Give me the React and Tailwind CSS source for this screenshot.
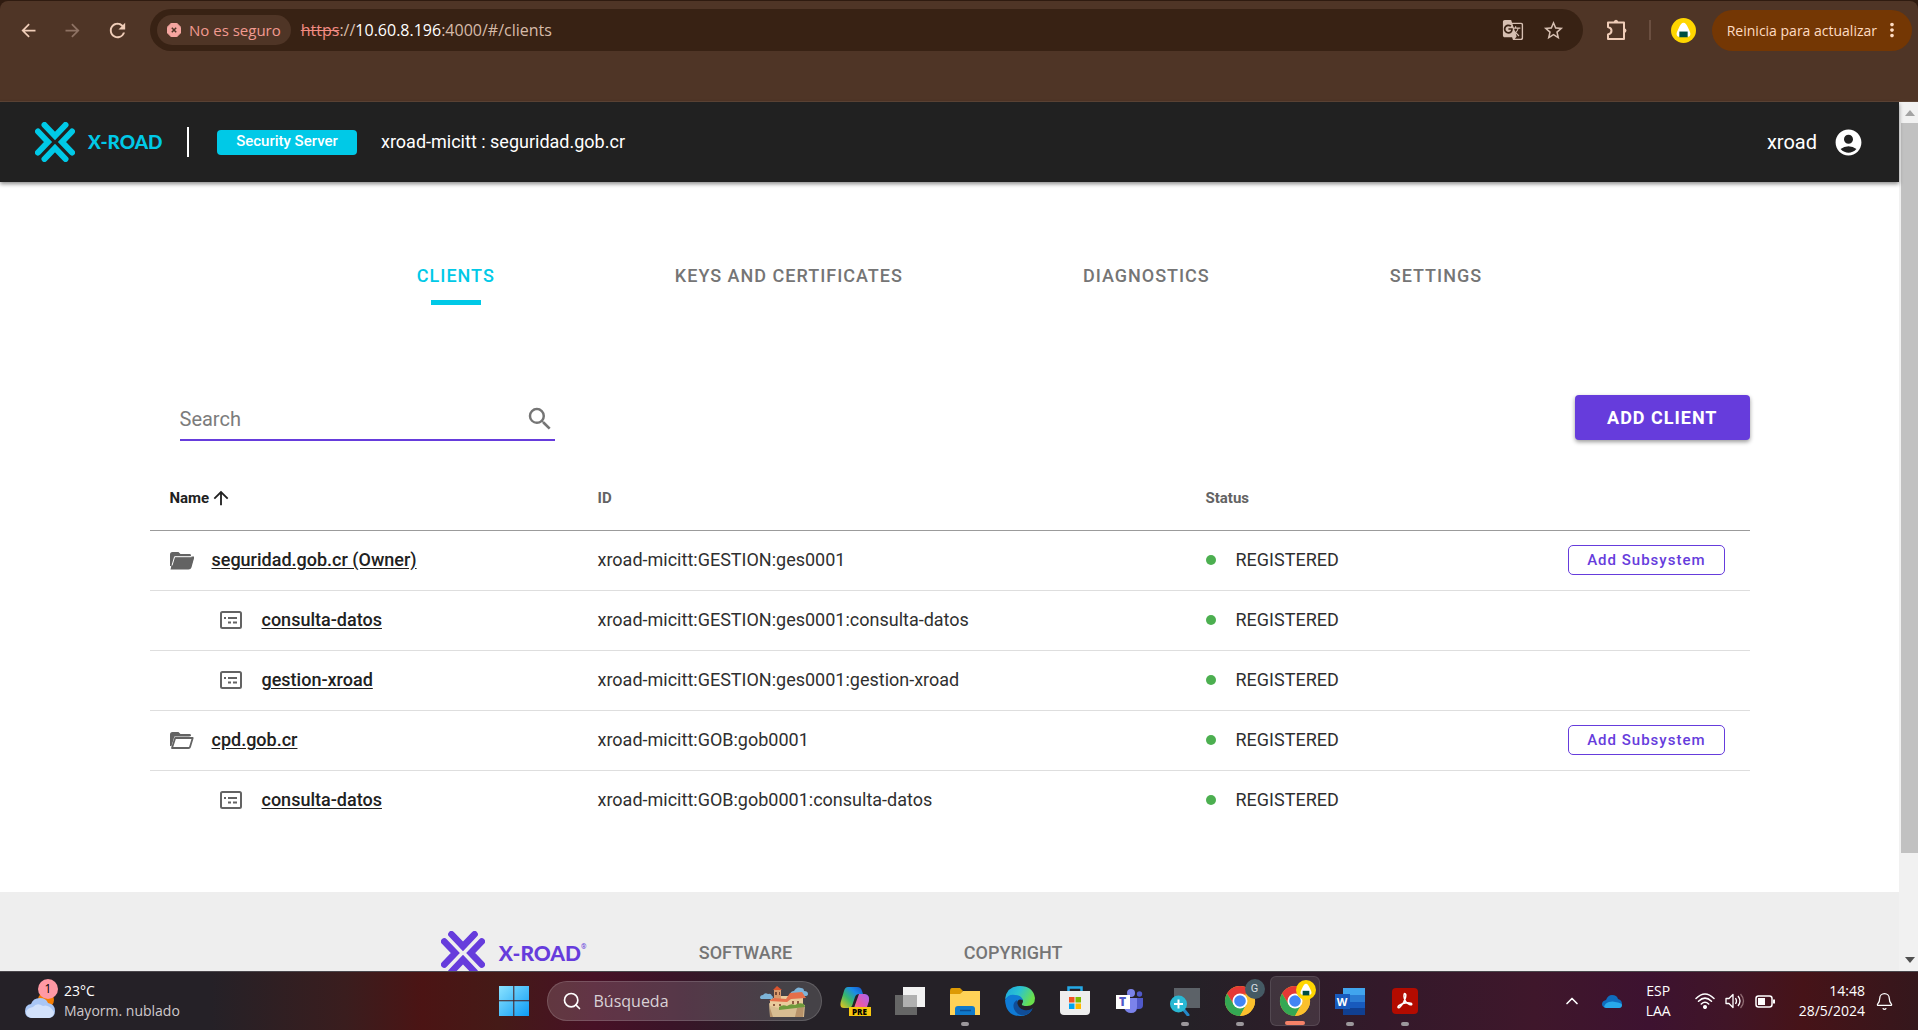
import React from "react";
import {
  MdAccountCircle,
  MdSearch,
  MdArrowBack,
  MdArrowForward,
  MdRefresh,
  MdStarBorder,
  MdGTranslate,
  MdMoreVert,
  MdArrowUpward,
} from "react-icons/md";
import { ChevronUp, Bell, Search } from "lucide-react";

const ui = "font-['Open_Sans',sans-serif]";

const clients = [
  { name: "seguridad.gob.cr (Owner)", id: "xroad-micitt:GESTION:ges0001", kind: "owner" },
  { name: "consulta-datos", id: "xroad-micitt:GESTION:ges0001:consulta-datos", kind: "sub" },
  { name: "gestion-xroad", id: "xroad-micitt:GESTION:ges0001:gestion-xroad", kind: "sub" },
  { name: "cpd.gob.cr", id: "xroad-micitt:GOB:gob0001", kind: "member" },
  { name: "consulta-datos", id: "xroad-micitt:GOB:gob0001:consulta-datos", kind: "sub" },
];

function XMark({ className }) {
  return (
    <svg viewBox="0 0 40 40" className={className} fill="none" stroke="currentColor" strokeWidth="6" strokeLinecap="round" strokeLinejoin="miter">
      <path d="M9.5 3 L20 14 L30.5 3" />
      <path d="M9.5 37 L20 26 L30.5 37" />
      <path d="M3 9.5 L13 20 L3 30.5" />
      <path d="M37 9.5 L27 20 L37 30.5" />
    </svg>
  );
}

function FolderOpen({ filled }) {
  return (
    <svg viewBox="0 0 24 18" className="h-[19px] w-6 text-[#636363]" fill="none">
      <path d="M1 15V2.5Q1 1 2.5 1H8L10 3H20Q21 3 21 4.5" fill="currentColor" />
      <path d="M1 14.5V3Q1 1.5 2.5 1.5H8L10 3.5H20.5" stroke="currentColor" strokeWidth="2" />
      <path d="M2.5 16.5 L5.5 6.5H22.5L20 15.5Q19.700 16.5 18.5 16.5Z" fill={filled ? "currentColor" : "#fff"} stroke={filled ? "currentColor" : "#fff"} strokeWidth="3" />
      <path d="M2 16.5 L5.2 6.5H22.700L20 15.5Q19.700 16.5 18.5 16.5Z" fill={filled ? "currentColor" : "#fff"} stroke="currentColor" strokeWidth="1.8" strokeLinejoin="round" />
      {filled && <path d="M2 14L4.6 5.2H21.5" stroke="#fff" strokeWidth="1" />}
    </svg>
  );
}

function SubsystemIcon() {
  return (
    <svg viewBox="0 0 22 18" className="h-[18px] w-[22px] text-[#636363]" fill="none">
      <rect x="1" y="1" width="20" height="16" rx="1.5" stroke="currentColor" strokeWidth="2" />
      <path d="M4 7H6M8 7H17M8 11.5H11M13 11.5H17" stroke="currentColor" strokeWidth="2" />
    </svg>
  );
}

function PuzzleOutline() {
  return (
    <svg viewBox="0 0 24 24" className="size-6" fill="none" stroke="currentColor" strokeWidth="2" strokeLinejoin="round">
      <path d="M3 4.500H19V21H3V16.500Q6.500 15.500 6.500 12.700T3 9Z" />
      <path d="M8.500 4.500Q9 1.800 11 1.800T13.500 4.500ZM19 10Q21.500 10.500 21.500 12.500T19 15Z" fill="currentColor" stroke="none" />
    </svg>
  );
}

function Onigiri({ className }) {
  return (
    <svg viewBox="0 0 24 24" className={className}>
      <circle cx="12" cy="12" r="12" fill="#ffd600" />
      <path d="M12 4.5c2 0 3 2 4.5 5 1.5 3 2.5 5 2 6.5-.3 1.5-1.5 2-3 2h-7c-1.5 0-2.700-.5-3-2-.5-1.5.5-3.5 2-6.5 1.5-3 2.5-5 4.5-5z" fill="#fff" />
      <path d="M8 13h8v5.5H8z" fill="#004d40" />
    </svg>
  );
}

function Chrome({ className }) {
  return (
    <svg viewBox="0 0 32 32" className={className}>
      <circle cx="16" cy="16" r="15" fill="#fbc02d" />
      <path d="M3 8.5A15 15 0 0 1 29 8.5L16 9L10 20Z" fill="#e53935" />
      <path d="M3 8.5A15 15 0 0 0 16 31L22 20L10 20Z" fill="#34a853" />
      <path d="M29 8.5A15 15 0 0 1 16 31L22.5 19.5L16 9Z" fill="#fbc02d" />
      <path d="M29 8.5H16V10Z" fill="#e53935" />
      <circle cx="16" cy="16" r="7.5" fill="#fff" />
      <circle cx="16" cy="16" r="5.8" fill="#4285f4" />
    </svg>
  );
}

function BrowserBar() {
  return (
    <div className={`${ui} h-[102px] shrink-0 border-t border-b border-[#2f1b10] border-b-[#5e4536] bg-[#2f1b10]`}>
      <div className="h-full rounded-t-lg bg-[#4f3526]">
        <div className="flex items-center pt-2 pr-[6px] pl-4 text-[#f0cdb8]">
          <button aria-label="Atrás" className="grid size-6 place-items-center"><MdArrowBack size={21} /></button>
          <button aria-label="Adelante" className="ml-5 grid size-6 place-items-center text-[#8e7263]"><MdArrowForward size={21} /></button>
          <button aria-label="Recargar" className="ml-[21px] grid size-6 place-items-center"><MdRefresh size={23} /></button>
          <div className="ml-[21px] flex h-[42px] min-w-0 flex-1 items-center rounded-full bg-[#382214] pr-[18px] pl-[7px]">
            <button className="flex h-[30px] items-center gap-2 rounded-full bg-[#4f3526] pr-[10px] pl-[10px] text-[15px] text-[#f29a90]">
              <svg viewBox="0 0 14 14" className="size-[14px]">
                <path d="M4.5 0h5L14 4.5v5L9.5 14h-5L0 9.5v-5z" fill="#f6a6a0" stroke="#f6a6a0" strokeLinejoin="round" />
                <path d="M4.8 4.8l4.4 4.4M9.2 4.8L4.8 9.2" stroke="#4f3526" strokeWidth="1.5" />
              </svg>
              No es seguro
            </button>
            <div className="ml-[10px] flex-1 text-base text-[#d6bba9]">
              <span className="text-[#f28b82] line-through">https</span>://<span className="text-white">10.60.8.196</span>:4000/#/clients
            </div>
            <button aria-label="Traducir" className="text-[#d6bfb1]"><MdGTranslate size={22} /></button>
            <button aria-label="Marcador" className="ml-[18px] text-[#d6bfb1]"><MdStarBorder size={23} /></button>
          </div>
          <button aria-label="Extensiones" className="ml-[22px]"><PuzzleOutline /></button>
          <div className="ml-5 h-5 w-[2px] bg-[#6b4f40]" />
          <button aria-label="Perfil" className="ml-5"><Onigiri className="size-[25px]" /></button>
          <button className="ml-4 flex h-[41px] items-center gap-1 rounded-full bg-[#743704] pr-[9px] pl-[15px] text-[14px] text-[#ffdcc3]">
            Reinicia para actualizar
            <MdMoreVert size={22} />
          </button>
        </div>
      </div>
    </div>
  );
}

function AppHeader() {
  return (
    <header className="relative z-10 flex h-20 shrink-0 items-center bg-[#212121] px-[35px] text-white shadow-[0_2px_4px_rgba(0,0,0,0.45)]">
      <XMark className="size-10 text-[#00c9e7]" />
      <span className="ml-[13px] w-[79px] font-['Lato',sans-serif] text-[19px] font-black text-[#00c9e7]">X-ROAD</span>
      <div className="ml-5 h-[30px] w-[2px] bg-white" />
      <span className="ml-7 flex h-[25px] w-[140px] items-center justify-center rounded bg-[#00c9e7] pb-[2px] text-[15px] font-medium">Security Server</span>
      <span className="ml-6 text-lg">xroad-micitt : seguridad.gob.cr</span>
      <span className="ml-auto text-xl">xroad</span>
      <button aria-label="Account" className="ml-4"><MdAccountCircle size={31} /></button>
    </header>
  );
}

function Tabs() {
  return (
    <nav className="mt-[74px] flex justify-center gap-[180px] text-lg font-medium tracking-[1px] text-[#757575]">
      <a href="#clients" className="flex flex-col items-center text-[#00c9e7]">
        <span className="leading-10">CLIENTS</span>
        <span className="mt-1 h-[5px] w-[50px] bg-[#00c9e7]" />
      </a>
      <a href="#keys" className="leading-10">KEYS AND CERTIFICATES</a>
      <a href="#diagnostics" className="leading-10">DIAGNOSTICS</a>
      <a href="#settings" className="leading-10">SETTINGS</a>
    </nav>
  );
}

function ClientsTable() {
  return (
    <table className="mt-[26px] w-full table-fixed border-collapse text-left text-lg text-[#2f2f2f]">
      <colgroup>
        <col className="w-[27%]" />
        <col className="w-[38%]" />
        <col className="w-[18%]" />
        <col />
      </colgroup>
      <thead>
        <tr className="h-[63px] border-b border-[#9b9b9b] text-[15px] text-[#636363]">
          <th className="pl-5 font-bold text-[#212121]"><span className="flex items-center">Name <MdArrowUpward size={22} className="ml-px" /></span></th>
          <th className="pl-4 font-bold">ID</th>
          <th className="pl-4 font-bold">Status</th>
          <th aria-label="Actions" />
        </tr>
      </thead>
      <tbody>
        {clients.map((c) => (
          <tr key={c.id} className="h-[60px] border-b border-[#dedede] last:border-0">
            <td className={c.kind === "sub" ? "pl-[70px]" : "pl-5"}>
              <div className="flex items-center">
                {c.kind === "sub" ? <SubsystemIcon /> : <FolderOpen filled={c.kind === "owner"} />}
                <a href="#client" className={`${c.kind === "sub" ? "ml-5" : "ml-[18px]"} font-medium text-[#212121] underline underline-offset-2`}>{c.name}</a>
              </div>
            </td>
            <td className="pl-4">{c.id}</td>
            <td className="pl-4">
              <span className="flex items-center gap-5"><i className="size-[10px] rounded-full bg-[#4caf50]" />REGISTERED</span>
            </td>
            <td className="pr-[25px] text-right">
              {c.kind !== "sub" && (
                <button className="h-[30px] rounded-[5px] border border-[#663cdc] px-[18px] align-middle text-[15px] leading-none font-medium tracking-[1px] text-[#663cdc]">Add Subsystem</button>
              )}
            </td>
          </tr>
        ))}
      </tbody>
    </table>
  );
}

function Footer() {
  return (
    <footer className="mt-auto flex h-[79px] shrink-0 items-start overflow-hidden bg-[#eeeeee] pl-[23%] text-lg font-medium text-[#757575]">
      <div className="flex w-[262px] shrink-0 items-center pt-[39px] pl-1 text-[#663cdc]">
        <XMark className="size-11" />
        <span className="ml-[14px] font-['Lato',sans-serif] text-[21px] font-black">X-ROAD</span>
        <span className="-mt-3 text-[7px]">®</span>
      </div>
      <span className="mt-[47px] w-[265px]">SOFTWARE</span>
      <span className="mt-[47px]">COPYRIGHT</span>
    </footer>
  );
}

function Scrollbar() {
  return (
    <div className="flex w-[19px] shrink-0 flex-col items-center bg-[#f1f1f1] pl-[2px]">
      <svg viewBox="0 0 10 6" className="mt-2 h-[6px] w-[10px]"><path d="M0 6L5 0l5 6z" fill="#a3a3a3" /></svg>
      <div className="mt-[7px] w-full flex-[730] bg-[#c1c1c1]" />
      <div className="flex-[104]" />
      <svg viewBox="0 0 10 6" className="mb-2 h-[6px] w-[10px]"><path d="M0 0L5 6l5-6z" fill="#505050" /></svg>
    </div>
  );
}

function Castle() {
  return (
    <svg viewBox="0 0 50 31" className="h-[31px] w-[50px]">
      <path d="M1 12q0-3 3-3 2-3 5-1 3-1 4 2 2 1 0 3H2zM31 8q1-3 4-3 3-5 7-3 3 0 3 3 4 0 4 3 0 2-3 2H32z" fill="#7db3d8" />
      <path d="M10 17l10 4 26-2-1 12H11z" fill="#d8bd92" />
      <path d="M11 22l3 9h-3zM38 22l7-2-1 11h-8z" fill="#b8936a" />
      <path d="M11 14l7-4h26v11l-24 1-9-2z" fill="#eacb9c" />
      <path d="M15 4h7v10h-7z" fill="#d99a6c" />
      <path d="M14 4l4-4 5 4z" fill="#d9542f" />
      <path d="M16 6h2v3h-2zM20 6h1v3h-1z" fill="#7a4a35" />
      <path d="M10 15l5-3 12 1 4-6 12-1 4 6-15 1-4 3z" fill="#e66f4a" />
      <path d="M14 18h2v2h-2zM20 18h2v2h-2zM33 15h2v3h-2zM38 15h2v3h-2z" fill="#8f5c42" />
      <path d="M20 21q4-3 8-1 4-3 8-1 4-3 9-1l1 3-26 3z" fill="#6f9a3c" />
    </svg>
  );
}

function TaskButton({ children, indicator, active, label }) {
  return (
    <button aria-label={label} className={`relative grid h-[50px] w-[50px] shrink-0 place-items-center rounded-md ${active ? "border border-white/10 bg-white/10" : ""}`}>
      {children}
      {indicator && <span className={`absolute bottom-0 left-1/2 h-1 -translate-x-1/2 rounded-full ${active ? "w-5 bg-[#f58268]" : "w-2 bg-[#9c989c]"}`} />}
    </button>
  );
}

function Taskbar() {
  return (
    <div className={`${ui} flex h-[59px] shrink-0 items-center border-t border-[#4a464b] bg-[linear-gradient(90deg,#252127_0%,#252127_11%,#3a1d1e_18%,#4b1414_22%,#451a17_26%,#471126_31%,#3a1428_35%,#252127_41%,#252127_62%,#33192a_72%,#3f172b_80%,#3d1230_86%,#401527_90%,#461318_94%,#35171c_100%)] text-white`}>
      <button className="flex flex-1 items-center gap-2 pl-6 text-left text-[14px] leading-5">
        <span className="relative block h-[38px] w-8">
          <svg viewBox="0 0 32 38" className="h-[38px] w-8">
            <circle cx="22" cy="18" r="8" fill="#f57c00" />
            <path d="M7 36q-6-1-6-7 0-6 6-7 2-6 9-6 6 0 8 5 7 1 7 8 0 6-6 7z" fill="#a9c6f5" />
            <path d="M8 36q-6-1-6-6 1-4 7-5 4-5 10-1 6-2 11 6 0 5-5 6z" fill="#d2e1fb" />
          </svg>
          <span className="absolute -top-[3px] -right-[2px] grid size-5 place-items-center rounded-full bg-[#ff99a4] text-xs text-black">1</span>
        </span>
        <span>23°C<br /><span className="text-[#cfc9cd]">Mayorm. nublado</span></span>
      </button>
      <div className="flex shrink-0 items-center gap-[5px]">
        <TaskButton label="Inicio">
          <svg viewBox="0 0 30 30" className="size-[30px]">
            <defs><linearGradient id="w" x1="0" y1="0" x2="1" y2="1"><stop stopColor="#8be3ff" /><stop offset="1" stopColor="#0d9bf5" /></linearGradient></defs>
            <path d="M0 0h14.3v14.3H0zM15.3 0H30v14.3H15.3zM0 15.3h14.3V30H0zM15.3 15.3H30V30H15.3z" fill="url(#w)" />
          </svg>
        </TaskButton>
        <label className="mx-[3px] flex h-10 w-[275px] items-center rounded-full border border-white/15 bg-white/15 pr-3 pl-[14px]">
          <Search size={20} strokeWidth={2} />
          <input aria-label="Búsqueda" placeholder="Búsqueda" className="ml-3 w-0 min-w-0 flex-1 bg-transparent text-base outline-none placeholder:text-[#d9d2d6]" />
          <Castle />
        </label>
        <TaskButton label="Copilot">
          <span className="relative">
            <svg viewBox="0 0 30 30" className="size-[30px]">
              <defs>
                <linearGradient id="ca" x1="0" y1="1" x2="1" y2="0"><stop stopColor="#f5c518" /><stop offset=".4" stopColor="#37b86b" /><stop offset=".7" stopColor="#1b8be8" /><stop offset="1" stopColor="#1450c8" /></linearGradient>
                <linearGradient id="cb" x1="1" y1="0" x2="0" y2="1"><stop stopColor="#a565f5" /><stop offset=".5" stopColor="#e759a8" /><stop offset="1" stopColor="#ff9b52" /></linearGradient>
              </defs>
              <path d="M8 1h9q4 0 5 4l1 3h-4q-3 0-4 3l-3 9q-1 2-4 2H4q-5 0-3-7l3-10q1-4 4-4z" fill="url(#ca)" />
              <path d="M19 8h6q5 1 4 7l-3 9q-1 4-5 4h-6q-4 0-4-5h1q2 0 3-4z" fill="url(#cb)" />
            </svg>
            <span className="absolute -right-px bottom-0 grid h-[9px] w-[22px] place-items-center bg-[#f9c80e] text-[8px] leading-none font-extrabold text-black">PRE</span>
          </span>
        </TaskButton>
        <TaskButton label="Vista de tareas">
          <svg viewBox="0 0 30 28" className="h-7 w-[30px]"><path d="M8 0h22v20H8z" fill="#f2f2f2" /><path d="M0 8h22v20H0z" fill="#666" /><path d="M8 8h14v12H8z" fill="#b0b0b0" /></svg>
        </TaskButton>
        <TaskButton label="Explorador" indicator>
          <svg viewBox="0 0 30 27" className="h-[27px] w-[30px]"><path d="M0 3q0-3 2-3h8l3 3-3 4H0z" fill="#dd9a04" /><path d="M0 6h10l3-3h17v24H0z" fill="#ffd257" /><path d="M5 27v-6q0-3 3-3h14q3 0 3 3v6z" fill="#0f7acb" /><path d="M10 22.5h11" stroke="#0a4f94" strokeWidth="1.5" /></svg>
        </TaskButton>
        <TaskButton label="Edge">
          <svg viewBox="0 0 30 30" className="size-[30px]">
            <defs><linearGradient id="e" x1="0" y1="0" x2="1" y2=".4"><stop stopColor="#1ba3e0" /><stop offset=".5" stopColor="#2bc3d2" /><stop offset="1" stopColor="#6ae04c" /></linearGradient></defs>
            <path d="M0 13Q2 0 15 0q13 0 15 12 0 8-8 8-6 0-5-2 2-3 0-5-3-4-8-3-6 1-9 3z" fill="url(#e)" />
            <path d="M0 14q3-6 10-5 6 0 8 5-6-2-6 4 1 6 8 8 4 0 7-2-4 6-12 6Q1 30 0 14z" fill="#0f7bd5" />
            <path d="M12 14q-5 3-3 9 3 7 11 6 5-1 8-7-4 3-9 2-7-2-7-10z" fill="#104d97" />
          </svg>
        </TaskButton>
        <TaskButton label="Microsoft Store">
          <svg viewBox="0 0 30 30" className="size-[30px]"><path d="M8.5 5V1.5h13V5" stroke="#24a9e6" strokeWidth="2.5" fill="none" /><path d="M0 5h30v20q0 4-4 4H4q-4 0-4-4z" fill="#eeeeee" /><path d="M9 11h5.5v5.5H9z" fill="#f25022" /><path d="M15.5 11H21v5.5h-5.5z" fill="#7fba00" /><path d="M9 17.5h5.5V23H9z" fill="#00a4ef" /><path d="M15.5 17.5H21V23h-5.5z" fill="#ffb900" /></svg>
        </TaskButton>
        <TaskButton label="Teams">
          <span className="relative">
            <svg viewBox="0 0 28 25" className="h-[25px] w-7"><circle cx="15" cy="4" r="4" fill="#7b83eb" /><circle cx="23.5" cy="5" r="2.7" fill="#5059c9" /><path d="M19 9h8v7q0 4-4 4h-4z" fill="#5059c9" /><path d="M8 9h13v9q0 6-6 6-5 0-7-5z" fill="#7b83eb" /><path d="M0 6h14v14H0z" fill="#fff" /></svg>
            <span className="absolute top-[6px] left-0 w-[14px] text-center text-[12px] leading-[14px] font-extrabold text-[#5059c9]">T</span>
          </span>
        </TaskButton>
        <TaskButton label="Lupa" indicator>
          <svg viewBox="0 0 30 30" className="size-[30px]"><path d="M4 2h26v20H4z" fill="#5c6268" /><path d="M14 24l4 5" stroke="#2488c8" strokeWidth="3" strokeLinecap="round" /><circle cx="8.5" cy="18" r="8.5" fill="#29b8d3" /><path d="M8.5 13.5v9M4 18h9" stroke="#fff" strokeWidth="2" /></svg>
        </TaskButton>
        <TaskButton label="Chrome G" indicator>
          <Chrome className="size-8" />
          <span className="absolute top-[3px] right-0 grid size-5 place-items-center rounded-full bg-[#455a64] font-['Roboto',sans-serif] text-[11px] text-[#d7dde0]">G</span>
        </TaskButton>
        <TaskButton label="Chrome" indicator active>
          <Chrome className="size-8" />
          <span className="absolute top-[3px] right-[3px]"><Onigiri className="size-5" /></span>
        </TaskButton>
        <TaskButton label="Word" indicator>
          <span className="relative">
            <svg viewBox="0 0 30 27" className="h-[27px] w-[30px]"><path d="M8 0h22v7H8z" fill="#41a5ee" /><path d="M8 7h22v7H8z" fill="#2b7cd3" /><path d="M8 14h22v6H8z" fill="#185abd" /><path d="M8 20h22v7H8z" fill="#103f91" /><path d="M0 6h15v15H0z" fill="#185abd" /></svg>
            <span className="absolute top-[6px] left-0 w-[15px] text-center text-[11px] leading-[15px] font-bold">W</span>
          </span>
        </TaskButton>
        <TaskButton label="Acrobat" indicator>
          <svg viewBox="0 0 26 26" className="size-[26px]"><rect width="26" height="26" rx="4" fill="#b30b00" /><path d="M12.5 5.5q2 0 1 4-1 5-5 9-2 2-2.5 1-.5-2 5-4 5-1.5 8.5 0 1 2-2 1-5-2-5.5-8 0-3 .5-3z" fill="none" stroke="#fff" strokeWidth="1.5" /></svg>
        </TaskButton>
      </div>
      <div className="flex flex-1 items-center justify-end pr-6 text-[14px] leading-5">
        <ChevronUp size={20} />
        <svg viewBox="0 0 20 13" className="ml-[20px] h-[13px] w-5"><path d="M4 13q-4-1-4-4t4-4q2-5 6-5 5 0 6 4 4 1 4 5 0 3-3 4z" fill="#0f6cbd" /><path d="M2 12q1-4 5-5 4-1 6 0 7 1 7 3 0 3-3 3H4z" fill="#28a8ea" /></svg>
        <span className="ml-6 text-center">ESP<br />LAA</span>
        <svg viewBox="0 0 20 16" className="ml-6 h-4 w-5" fill="none" stroke="#fff" strokeWidth="1.5" strokeLinecap="round"><path d="M1 5.5q9-9 18 0M3.5 8.3q6.5-6.3 13 0M6.3 11q3.7-3.4 7.4 0" /><circle cx="10" cy="14" r="1.3" fill="#fff" /></svg>
        <svg viewBox="0 0 20 16" className="ml-[10px] h-4 w-5" fill="none" stroke="#fff" strokeWidth="1.3" strokeLinejoin="round"><path d="M1 5.5h3l4-4v13l-4-4H1zM10.5 5q2 3 0 6M13 3q4 5 0 10" /><path d="M15.5 1q6 7 0 14" stroke="#8f6b72" /></svg>
        <svg viewBox="0 0 20 13" className="ml-[10px] h-[13px] w-5" fill="none" stroke="#fff" strokeWidth="1.5"><rect x="1" y="1" width="16" height="11" rx="2.5" /><path d="M3 3h7v7H3z" fill="#fff" stroke="none" /><path d="M19 4.5v4" strokeWidth="2" /></svg>
        <span className="ml-6 text-right">14:48<br />28/5/2024</span>
        <button aria-label="Notificaciones" className="ml-[10px]"><Bell size={19} strokeWidth={1.6} /></button>
      </div>
    </div>
  );
}

export default function App() {
  return (
    <div className="flex h-screen flex-col overflow-hidden bg-white font-['Roboto',sans-serif]">
      <BrowserBar />
      <div className="flex min-h-0 flex-1">
        <div className="flex min-w-0 flex-1 flex-col">
          <AppHeader />
          <Tabs />
          <main className="mx-auto mt-[90px] w-[calc(100%-298px)] max-w-[1600px]">
            <div className="flex items-start justify-between">
              <label className="ml-[30px] flex h-[46px] w-[375px] items-center border-b-2 border-[#663cdc] pt-1 text-[#757575]">
                <input type="text" placeholder="Search" aria-label="Search" className="min-w-0 flex-1 bg-transparent text-xl outline-none placeholder:text-[#7c7c7c]" />
                <MdSearch size={30} />
              </label>
              <button className="h-[45px] rounded bg-[#663cdc] px-8 text-lg font-bold tracking-[1px] text-white shadow-[0_2px_4px_rgba(0,0,0,0.4)]">ADD CLIENT</button>
            </div>
            <ClientsTable />
          </main>
          <Footer />
        </div>
        <Scrollbar />
      </div>
      <Taskbar />
    </div>
  );
}
